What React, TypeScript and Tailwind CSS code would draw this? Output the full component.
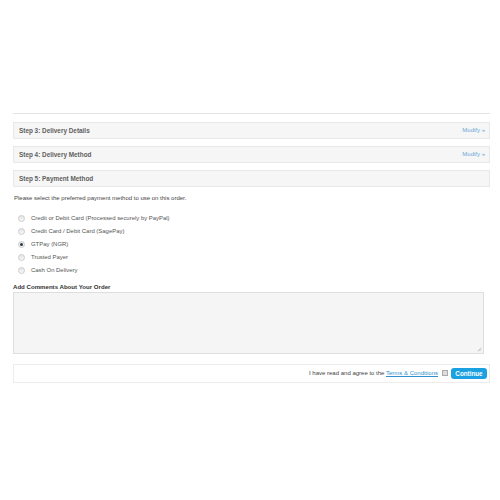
const METHODS = [
  "Credit or Debit Card (Processed securely by PayPal)",
  "Credit Card / Debit Card (SagePay)",
  "GTPay (NGR)",
  "Trusted Payer",
  "Cash On Delivery",
];

function StepBar({ title, modify }: { title: string; modify?: boolean }) {
  return (
    <div className="flex h-[17px] items-center justify-between border border-[#e8e8e8] bg-[#f6f6f6] pl-[5px] pr-[4px]">
      <span className="text-[6.4px] font-bold text-[#606060]">{title}</span>
      {modify && (
        <span className="text-[6px] text-[#6aa8d8]">Modify &raquo;</span>
      )}
    </div>
  );
}

function Radio({ checked }: { checked?: boolean }) {
  return (
    <span className="flex h-[7px] w-[7px] items-center justify-center rounded-full border border-[#cccccc] bg-gradient-to-b from-[#e4e4e4] to-[#f8f8f8]">
      {checked && <span className="h-[3px] w-[3px] rounded-full bg-[#2a3a4a]" />}
    </span>
  );
}

export default function App() {
  return (
    <div className="h-[500px] w-[500px] bg-white font-['Liberation_Sans',Arial,sans-serif]">
      <div className="ml-[13px] w-[477px] pt-[113px]">
        <div className="h-px bg-[#e4e4e4]" />

        <div className="mt-[8px] flex flex-col gap-[7px]">
          <StepBar title="Step 3: Delivery Details" modify />
          <StepBar title="Step 4: Delivery Method" modify />
          <StepBar title="Step 5: Payment Method" />
        </div>

        <p className="mt-[7px] pl-px text-[6px] leading-[8px] text-[#444]">
          Please select the preferred payment method to use on this order.
        </p>

        <div className="mt-[12px] flex flex-col gap-[5.2px] pl-[5px]">
          {METHODS.map((m, i) => (
            <div key={m} className="flex h-[8px] items-center gap-[6px]">
              <Radio checked={i === 2} />
              <span className="text-[5.95px] text-[#555]">{m}</span>
            </div>
          ))}
        </div>

        <p className="mt-[8px] text-[6.1px] font-bold leading-[8px] text-[#333]">
          Add Comments About Your Order
        </p>

        <div className="relative mt-[1px] h-[62px] w-[471px] border border-[#dedede] bg-[#f5f5f5]">
          <svg
            viewBox="0 0 6 6"
            className="absolute bottom-px right-px h-[5px] w-[5px]"
            aria-hidden="true"
          >
            <path d="M1 5L5 1M3 5L5 3" stroke="#999" strokeWidth="0.7" />
          </svg>
        </div>

        <div className="mt-[10px] flex h-[19px] items-center justify-end border border-[#ececec] pr-[2px]">
          <span className="text-[6px] text-[#444]">
            I have read and agree to the{" "}
            <span className="text-[#2f8fd0] underline">Terms &amp; Conditions</span>
          </span>
          <span className="ml-[4px] h-[6px] w-[6px] border border-[#aaa] bg-[#ddd]" />
          <span className="ml-[3px] flex h-[11px] w-[36px] items-center justify-center rounded-[3px] bg-[#1ba1e2] text-[6.3px] font-bold text-white">
            Continue
          </span>
        </div>
      </div>
    </div>
  );
}
